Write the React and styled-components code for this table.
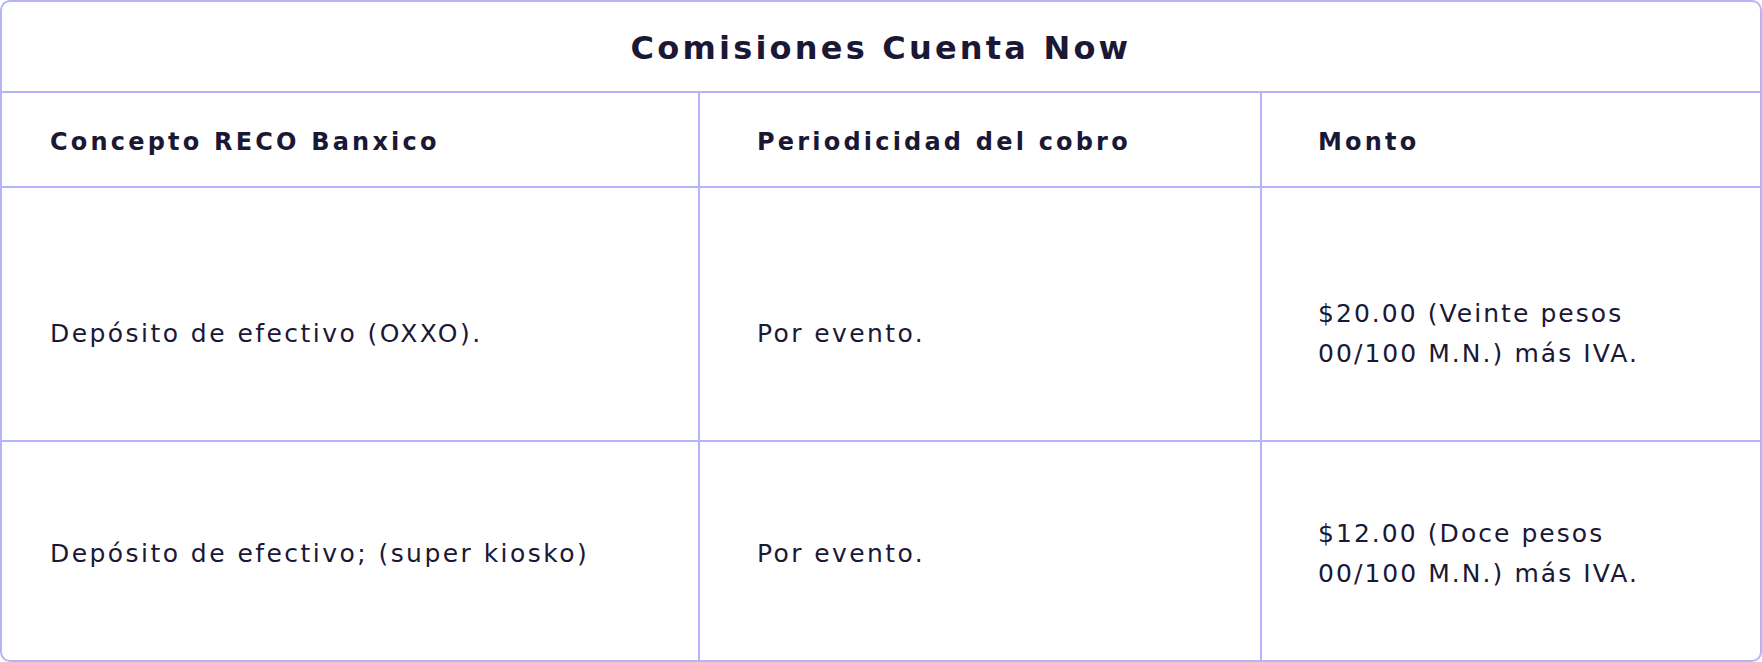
import React from "react";
import styled, { createGlobalStyle } from "styled-components";

const Global = createGlobalStyle`
  html, body { margin: 0; padding: 0; background: #ffffff; }
  body { font-family: "DejaVu Sans", "Liberation Sans", sans-serif; color: #1b1836; }
  * { box-sizing: border-box; }
`;

const LINE = "#b4b4f6";

const Table = styled.div`
  width: 1762px;
  height: 662px;
  border: 2px solid ${LINE};
  border-radius: 10px;
  overflow: hidden;
  display: flex;
  flex-direction: column;
`;

const Title = styled.div`
  height: 91px;
  flex: none;
  display: flex;
  align-items: center;
  justify-content: center;
  padding-top: 3px;
  font-size: 32px;
  font-weight: 700;
  letter-spacing: 3.2px;
  border-bottom: 2px solid ${LINE};
`;

const Row = styled.div`
  display: grid;
  grid-template-columns: 698px 562px 1fr;
  height: ${(p) => (p.$h ? `${p.$h}px` : "auto")};
  flex: ${(p) => (p.$h ? "none" : "1")};
  border-bottom: ${(p) => (p.$last ? "none" : `2px solid ${LINE}`)};
`;

const Cell = styled.div`
  display: flex;
  align-items: center;
  padding-left: ${(p) => p.$pl}px;
  padding-top: ${(p) => p.$pt || 0}px;
  border-right: ${(p) => (p.$last ? "none" : `2px solid ${LINE}`)};
  font-size: ${(p) => (p.$head ? 24 : 25)}px;
  line-height: 40px;
  letter-spacing: ${(p) => p.$ls}px;
  font-weight: ${(p) => (p.$head ? 700 : 400)};
  white-space: nowrap;
`;

const Lines = styled.div`
  display: flex;
  flex-direction: column;
`;

const PAD = [48, 57, 56];
const BODY_LS = [2.45, 2.4, 2.05];

const rows = [
  {
    h: 254,
    pt: 40,
    cells: ["Depósito de efectivo (OXXO).", "Por evento.", ["$20.00 (Veinte pesos", "00/100 M.N.) más IVA."]],
  },
  {
    pt: 6,
    cells: ["Depósito de efectivo; (super kiosko)", "Por evento.", ["$12.00 (Doce pesos", "00/100 M.N.) más IVA."]],
  },
];

export default function App() {
  return (
    <>
      <Global />
      <Table>
        <Title>Comisiones Cuenta Now</Title>
        <Row $h={95}>
          {["Concepto RECO Banxico", "Periodicidad del cobro", "Monto"].map((t, i) => (
            <Cell key={t} $head $pl={PAD[i]} $pt={4} $ls={3.2} $last={i === 2}>
              {t}
            </Cell>
          ))}
        </Row>
        {rows.map((r, ri) => (
          <Row key={ri} $h={r.h} $last={ri === rows.length - 1}>
            {r.cells.map((c, i) => (
              <Cell key={i} $pl={PAD[i]} $pt={r.pt} $ls={BODY_LS[i]} $last={i === 2}>
                {Array.isArray(c) ? (
                  <Lines>
                    {c.map((l) => (
                      <span key={l}>{l}</span>
                    ))}
                  </Lines>
                ) : (
                  c
                )}
              </Cell>
            ))}
          </Row>
        ))}
      </Table>
    </>
  );
}
